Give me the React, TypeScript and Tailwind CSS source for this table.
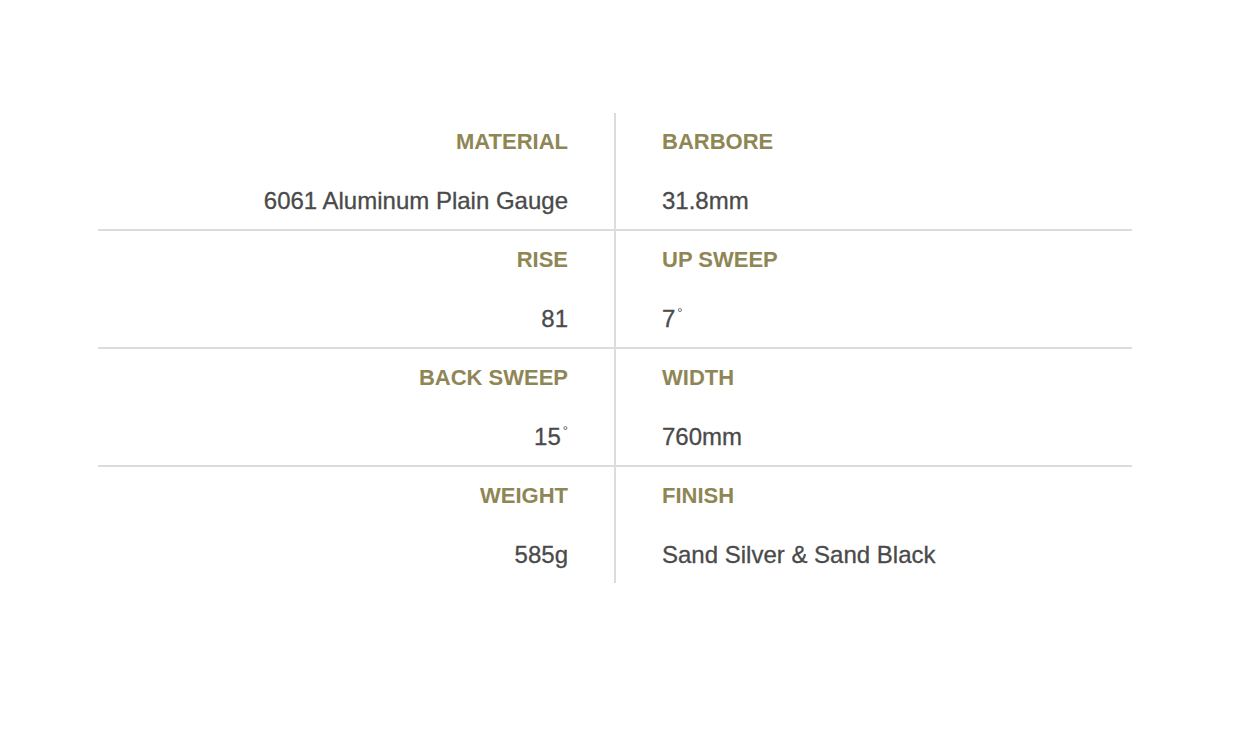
import React from "react";

type Cell = { label: string; value: React.ReactNode };

const Deg = () => (
  <span className="relative -top-[10px] ml-[2px] text-[13px] font-normal [-webkit-text-stroke:0px]">°</span>
);

const rows: [Cell, Cell][] = [
  [
    { label: "MATERIAL", value: "6061 Aluminum Plain Gauge" },
    { label: "BARBORE", value: "31.8mm" },
  ],
  [
    { label: "RISE", value: "81" },
    { label: "UP SWEEP", value: <>7<Deg /></> },
  ],
  [
    { label: "BACK SWEEP", value: <>15<Deg /></> },
    { label: "WIDTH", value: "760mm" },
  ],
  [
    { label: "WEIGHT", value: "585g" },
    { label: "FINISH", value: "Sand Silver & Sand Black" },
  ],
];

export default function App() {
  return (
    <div
      className="min-h-[741px] w-full bg-white pt-[113px]"
      style={{ fontFamily: '"Liberation Sans", Arial, sans-serif' }}
    >
      <div className="ml-[98px] w-[1034px]">
        {rows.map((row, i) => (
          <div
            key={i}
            className={`grid grid-cols-[518px_516px] ${
              i < rows.length - 1 ? "border-b-2 border-[#dcdcdc]" : ""
            }`}
          >
            <div className="flex h-[116px] flex-col items-end border-r-2 border-[#dcdcdc] pr-[46px] pt-[14px]">
              <div className="h-[30px] text-[22px] font-bold leading-[30px] text-[#8f8656]">
                {row[0].label}
              </div>
              <div className="mt-[29px] h-[30px] text-[24px] leading-[30px] text-[#4a4a4a] [-webkit-text-stroke:0.3px_#4a4a4a]">
                {row[0].value}
              </div>
            </div>
            <div className="flex h-[116px] flex-col items-start pl-[46px] pt-[14px]">
              <div className="h-[30px] text-[22px] font-bold leading-[30px] text-[#8f8656]">
                {row[1].label}
              </div>
              <div className="mt-[29px] h-[30px] text-[24px] leading-[30px] text-[#4a4a4a] [-webkit-text-stroke:0.3px_#4a4a4a]">
                {row[1].value}
              </div>
            </div>
          </div>
        ))}
      </div>
    </div>
  );
}
